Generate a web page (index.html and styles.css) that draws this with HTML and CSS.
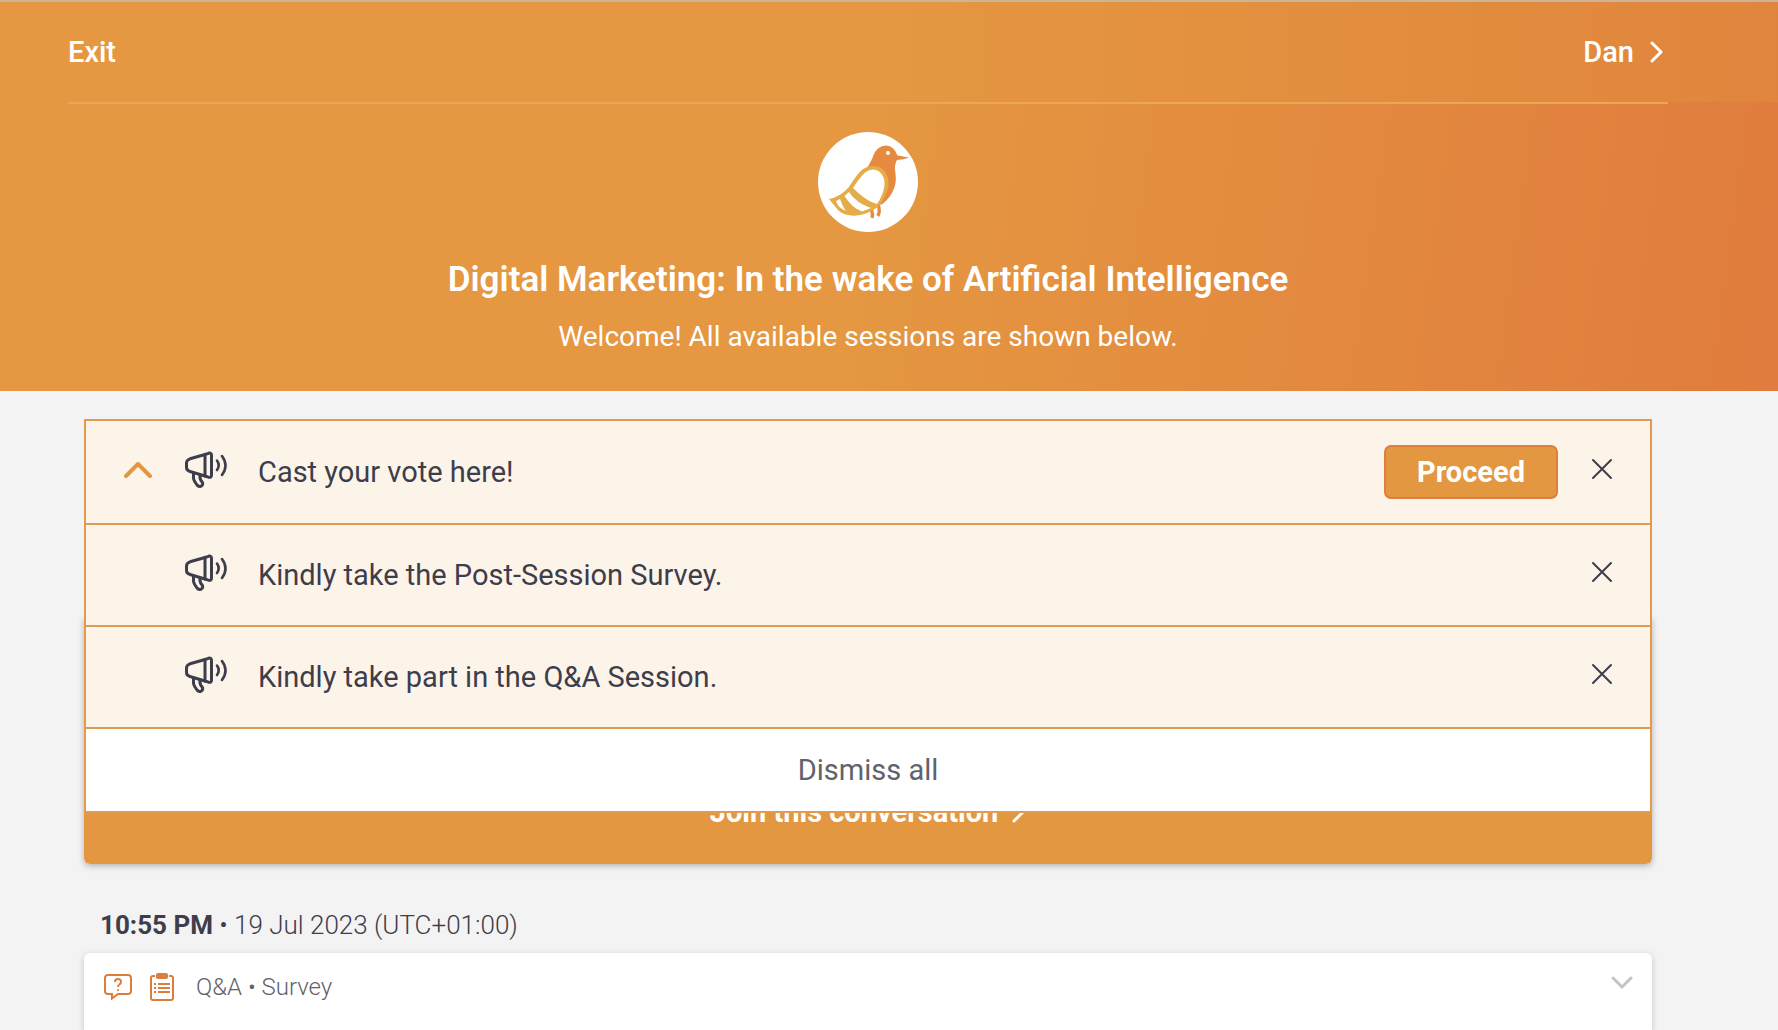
FILE: index.html
```
<!DOCTYPE html>
<html lang="en">
<head>
    <meta charset="UTF-8">
    <meta name="viewport" content="width=device-width, initial-scale=1.0">
    <title>Digital Marketing: In the wake of Artificial Intelligence</title>
    <link rel="stylesheet" href="styles.css">
</head>
<body>
    <!-- Shared megaphone icon -->
    <svg class="icon-defs" aria-hidden="true">
        <symbol id="megaphone" viewBox="0 0 44 42">
            <g fill="none" stroke="currentColor" stroke-width="3" stroke-linecap="round" stroke-linejoin="round">
                <path d="M21 3.500L6 7.800Q2.500 9 2.500 12V16.500Q2.500 19.500 6 20.500L21 25"/>
                <path d="M21 3.500L24.500 2.300Q27.500 1.500 27.500 4.300V24Q27.500 27 24.500 26.200L21 25Z"/>
                <path d="M9.500 22V27Q9.500 29 11 31L13 34Q14.500 36 17 35.200Q19.300 34 18.500 31.500Q15.500 28.500 16 24.500"/>
            </g>
            <g fill="none" stroke="currentColor" stroke-width="2.600" stroke-linecap="round">
                <path d="M33 9.500Q36.500 14.500 33 19"/>
                <path d="M38 5Q45 14.500 38 24"/>
            </g>
        </symbol>
    </svg>

    <header class="header">
        <div class="top-bar">
            <nav class="top-nav">
                <a href="#" class="nav-link">Exit</a>
                <a href="#" class="nav-link">Dan
                    <svg class="nav-arrow" viewBox="0 0 14 22"><path d="M2 2L11 11L2 20"/></svg>
                </a>
            </nav>
        </div>
        <div class="hero">
            <svg class="logo" viewBox="0 0 100 100" role="img" aria-label="Bird logo">
                <circle cx="50" cy="50" r="50" fill="#fff"/>
                <path d="M59 66L61 76Q62 80 60 84M53 74L54 80Q55 83 54 86" fill="none" stroke="#e68a3f" stroke-width="3.400"/>
                <path d="M49 36Q54 28 55.500 23Q59 14 68 13.500Q76 14 79.500 23.500L91 25.500Q86 27.500 79 28Q76 32 77.500 42Q79 52 74 61Q70 68 63 73L52 60Z" fill="#e68a3f"/>
                <path d="M11 67Q22 65 31 55C38 45 43 34 55 34C68 34 72 47 70 56C67 66 62 75 55 78C42 86 27 85 20 78Q15 72 11 67Z" fill="#e4ad48"/>
                <path d="M35 56C42 46 46 38 55 37.500C63 38 67 45 66.500 53C65.500 61 62 68 59 72Q50 69 44 64Q39 60 35 56Z" fill="#fff"/>
                <path d="M31 60Q38 71 53 76L44 79.500Q34 76 26.500 64Z" fill="#fff"/>
                <path d="M18 69L22 67Q25 75 28 79Q20 76 18 69Z" fill="#fff"/>
                <circle cx="70" cy="21" r="2" fill="#fff"/>
            </svg>
            <h1>Digital Marketing: In the wake of Artificial Intelligence</h1>
            <p>Welcome! All available sessions are shown below.</p>
        </div>
    </header>

    <main class="sessions">
        <section class="live-session">
            <button type="button" class="join-btn">Join this conversation
                <svg class="join-arrow" viewBox="0 0 14 22"><path d="M2 2L11 11L2 20"/></svg>
            </button>
        </section>

        <!-- Announcements open over the live session -->
        <div class="announcements">
            <div class="announcement first">
                <button type="button" class="icon-btn toggle" aria-label="Collapse announcements">
                    <svg viewBox="0 0 28 20"><path d="M2 14L14 2L26 14"/></svg>
                </button>
                <svg class="megaphone"><use href="#megaphone"/></svg>
                <p>Cast your vote here!</p>
                <button type="button" class="proceed-btn">Proceed</button>
                <button type="button" class="icon-btn close" aria-label="Dismiss">
                    <svg viewBox="0 0 20 24"><path d="M1 0L19 18M19 0L1 18"/></svg>
                </button>
            </div>
            <div class="announcement">
                <svg class="megaphone"><use href="#megaphone"/></svg>
                <p>Kindly take the Post-Session Survey.</p>
                <button type="button" class="icon-btn close" aria-label="Dismiss">
                    <svg viewBox="0 0 20 24"><path d="M1 0L19 18M19 0L1 18"/></svg>
                </button>
            </div>
            <div class="announcement">
                <svg class="megaphone"><use href="#megaphone"/></svg>
                <p>Kindly take part in the Q&amp;A Session.</p>
                <button type="button" class="icon-btn close" aria-label="Dismiss">
                    <svg viewBox="0 0 20 24"><path d="M1 0L19 18M19 0L1 18"/></svg>
                </button>
            </div>
            <button type="button" class="dismiss-btn">Dismiss all</button>
        </div>

        <h2 class="session-time"><strong>10:55 PM</strong> • 19 Jul 2023 (UTC+01:00)</h2>
        <section class="session-card">
            <svg class="type-icon" viewBox="0 0 28 28">
                <path d="M4 2H24Q27 2 27 5V18Q27 21 24 21H14L8 25.500V21H4Q1 21 1 18V5Q1 2 4 2Z"/>
                <path d="M11 9Q11 6 14 6Q17 6 17 8.800Q17 10.500 15.500 11.500Q14 12.500 14 14M14 16.500V18"/>
            </svg>
            <svg class="type-icon clipboard" viewBox="0 0 24 28">
                <path d="M5 3H3Q1 3 1 5V25Q1 27 3 27H21Q23 27 23 25V5Q23 3 21 3H19"/>
                <rect x="6" y="0" width="12" height="6" rx="2" fill="currentColor" stroke="none"/>
                <path d="M4 11H6M8 11H20M4 15H6M8 15H20M4 19H6M8 19H20"/>
            </svg>
            <p>Q&amp;A • Survey</p>
            <button type="button" class="icon-btn expand" aria-label="Show session details">
                <svg viewBox="0 0 22 20"><path d="M2 5L11 14L20 5"/></svg>
            </button>
        </section>
    </main>
</body>
</html>
```
FILE: styles.css
```
* {
    margin: 0;
    padding: 0;
    box-sizing: border-box;
}

body {
    font-family: Roboto, "Liberation Sans", Arial, sans-serif;
    background-color: #f3f3f3;
    color: #3d3d4b;
    font-size: 29px;
    min-height: 100vh;
    display: flex;
    flex-direction: column;
}

button {
    font-family: inherit;
    font-size: inherit;
    border: none;
    background: none;
    cursor: pointer;
}

svg {
    flex-shrink: 0;
}

.icon-defs {
    display: none;
}

/* Header */
.header {
    border-top: 2px solid #cbb595;
    color: #fff;
}

.top-bar {
    background: linear-gradient(90deg, #e59741 50%, #e0853d);
    padding: 0 110px 0 68px;
}

.top-nav {
    display: flex;
    justify-content: space-between;
    align-items: center;
    height: 100px;
}

.nav-link {
    display: flex;
    align-items: center;
    gap: 16px;
    color: #fff;
    font-weight: 500;
    text-decoration: none;
}

.nav-arrow {
    width: 14px;
    height: 22px;
    margin-right: 4px;
}

.nav-arrow path,
.join-arrow path {
    fill: none;
    stroke: currentColor;
    stroke-width: 3;
    stroke-linecap: round;
    stroke-linejoin: round;
}

.hero {
    background: linear-gradient(98deg, #e59741 48%, #e07c3d);
    padding: 0 110px 36px 68px;
    text-align: center;
}

.hero::before {
    content: "";
    display: block;
    height: 2px;
    background-color: #eba757;
}

.logo {
    display: block;
    width: 100px;
    height: 100px;
    margin: 28px auto 24px;
}

.hero h1 {
    font-size: 35px;
    font-weight: 600;
    line-height: 48px;
}

.hero p {
    font-size: 28px;
    line-height: 36px;
    margin-top: 15px;
}

/* Sessions */
.sessions {
    position: relative;
    flex: 1;
    display: flex;
    flex-direction: column;
    padding: 224px 126px 0 84px;
}

.live-session {
    display: flex;
    flex-direction: column;
    justify-content: flex-end;
    min-height: 249px;
    background-color: #fff;
    border-radius: 6px;
    box-shadow: 0 2px 6px rgba(61, 61, 75, 0.35);
}

.join-btn {
    display: flex;
    justify-content: center;
    align-items: center;
    gap: 14px;
    height: 104px;
    background-color: #e49741;
    color: #fff;
    font-weight: 700;
    border-radius: 0 0 6px 6px;
}

.join-arrow {
    width: 14px;
    height: 22px;
}

/* Announcements */
.announcements {
    position: absolute;
    top: 28px;
    left: 84px;
    right: 126px;
    border: 2px solid #e39a4c;
    background-color: #fff;
}

.announcement {
    display: flex;
    align-items: center;
    height: 102px;
    padding: 0 38px 0 98px;
    background-color: #fdf4e9;
    border-bottom: 2px solid #dc9a52;
}

.announcement.first {
    height: 104px;
    padding-left: 38px;
}

.announcement p {
    flex: 1;
    margin-left: 30px;
}

.icon-btn svg {
    display: block;
    fill: none;
    stroke: currentColor;
    stroke-linecap: round;
    stroke-linejoin: round;
}

.toggle {
    color: #e49741;
    margin-right: 32px;
}

.toggle svg {
    width: 28px;
    height: 20px;
    stroke-width: 4;
}

.megaphone {
    width: 44px;
    height: 42px;
}

.proceed-btn {
    width: 174px;
    height: 54px;
    background-color: #e49741;
    border: 2px solid #dc7f40;
    border-radius: 7px;
    color: #fff;
    font-weight: 700;
}

.close {
    color: #3d3d4b;
    margin-left: 34px;
}

.close svg {
    width: 20px;
    height: 24px;
    stroke-width: 2;
    overflow: visible;
}

.dismiss-btn {
    display: block;
    width: 100%;
    height: 82px;
    color: #62626d;
}

/* Upcoming session */
.session-time {
    font-size: 26px;
    font-weight: 300;
    line-height: 32px;
    margin: 45px 0 12px 16px;
}

.session-time strong {
    font-weight: 700;
}

.session-card {
    flex: 1;
    display: flex;
    align-items: flex-start;
    padding: 20px 19px 0 20px;
    background-color: #fff;
    border-radius: 6px 6px 0 0;
    box-shadow: 0 2px 6px rgba(61, 61, 75, 0.25);
}

.session-card p {
    flex: 1;
    color: #62626d;
    font-size: 24px;
    font-weight: 300;
    line-height: 28px;
    margin-left: 22px;
}

.type-icon {
    width: 28px;
    height: 28px;
    color: #dc7d3e;
    fill: none;
    stroke: currentColor;
    stroke-width: 2;
}

.clipboard {
    width: 24px;
    margin-left: 18px;
}

.expand {
    color: #c3c3c8;
}

.expand svg {
    width: 22px;
    height: 20px;
    stroke-width: 3;
}
```
